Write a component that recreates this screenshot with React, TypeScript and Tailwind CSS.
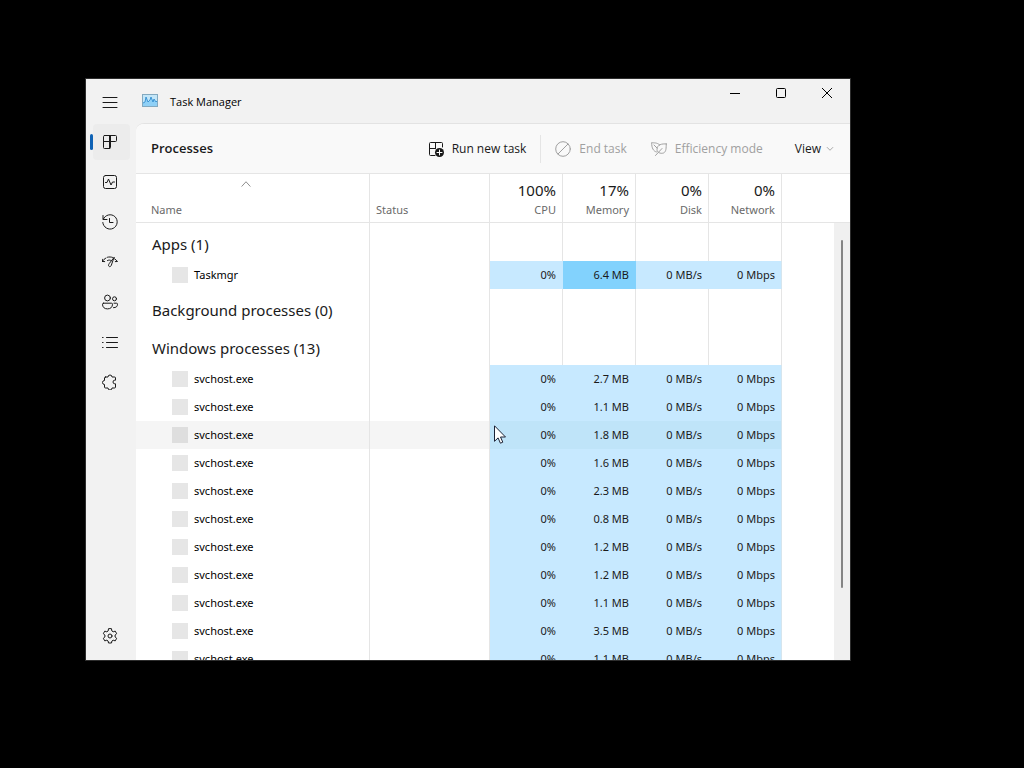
import type { ReactNode } from "react";

type Process = { name: string; memory: string; hot?: boolean; hovered?: boolean };
type Group = { title: string; rows: Process[] };

const groups: Group[] = [
  { title: "Apps (1)", rows: [{ name: "Taskmgr", memory: "6.4 MB", hot: true }] },
  { title: "Background processes (0)", rows: [] },
  {
    title: "Windows processes (13)",
    rows: [
      { name: "svchost.exe", memory: "2.7 MB" },
      { name: "svchost.exe", memory: "1.1 MB" },
      { name: "svchost.exe", memory: "1.8 MB", hovered: true },
      { name: "svchost.exe", memory: "1.6 MB" },
      { name: "svchost.exe", memory: "2.3 MB" },
      { name: "svchost.exe", memory: "0.8 MB" },
      { name: "svchost.exe", memory: "1.2 MB" },
      { name: "svchost.exe", memory: "1.2 MB" },
      { name: "svchost.exe", memory: "1.1 MB" },
      { name: "svchost.exe", memory: "3.5 MB" },
      { name: "svchost.exe", memory: "1.1 MB" },
    ],
  },
];

const metrics = [
  { value: "100%", label: "CPU" },
  { value: "17%", label: "Memory" },
  { value: "0%", label: "Disk" },
  { value: "0%", label: "Network" },
];

function Icon({ children, className = "size-4" }: { children: ReactNode; className?: string }) {
  return (
    <svg
      viewBox="0 0 16 16"
      fill="none"
      stroke="currentColor"
      strokeWidth="1"
      strokeLinecap="round"
      strokeLinejoin="round"
      className={`${className} shrink-0`}
      aria-hidden="true"
    >
      {children}
    </svg>
  );
}

const navItems: { label: string; icon: ReactNode }[] = [
  {
    label: "Processes",
    icon: <path d="M2.500 1.500h11a1 1 0 0 1 1 1v4a1 1 0 0 1-1 1h-12v-5a1 1 0 0 1 1-1ZM7.500 1.500v13M1.500 7.500v6a1 1 0 0 0 1 1h5a1 1 0 0 0 1-1V1.500" />,
  },
  {
    label: "Performance",
    icon: (
      <>
        <rect x="1.5" y="1.5" width="13" height="13" rx="2" />
        <path d="M3.500 8.500H5l1.500-3.500 2.500 6 1.500-3h2" />
      </>
    ),
  },
  {
    label: "App history",
    icon: <path d="M1 1.500v4h4M1.300 5.200A7.200 7.200 0 1 1 .8 8.500M7.500 4.500v4H11" />,
  },
  {
    label: "Startup apps",
    icon: <path d="M.500 7.500C1.300 6 2.500 4.800 4 4M.500 7.500l.2-2.200M.500 7.500l2.200.1M5.500 3.200c1.800-.4 3.500-.3 5 .2M12.500 4.800c1.200.7 2.200 1.600 3 2.700l-2.200.1M12 3.500 7.200 9.600c-.9 1.200-.9 2.500 0 2.900.9.400 1.700-.1 2.100-1.200L12 3.500ZM5.500 6.500c1.200-.6 2.500-.6 3.500 0" />,
  },
  {
    label: "Users",
    icon: (
      <>
        <circle cx="5.500" cy="4" r="2.900" />
        <circle cx="12.500" cy="4.800" r="2" />
        <path d="M1.500 9.200h8a1 1 0 0 1 1 1c0 2.900-1.800 4.700-5 4.700S.5 13.100.5 10.200a1 1 0 0 1 1-1ZM12 9.200h2.500a1 1 0 0 1 1 1c0 2.300-1.300 3.500-4 3.500" />
      </>
    ),
  },
  {
    label: "Details",
    icon: <path d="M.5 3.500h.6M.5 8.500h.6M.5 13.500h.6M4.500 3.500h11M4.500 8.500h11M4.500 13.500h11" />,
  },
  {
    label: "Services",
    icon: (
      <path d="M3.500 3H6a2 2 0 0 1 4 0h2.500a1 1 0 0 1 1 1v2.200h-.7a1.800 1.800 0 0 0 0 3.600h.7V13a1 1 0 0 1-1 1H10a2 2 0 0 1-4 0H3.500a1 1 0 0 1-1-1v-2.500a2 2 0 0 1 0-4V4a1 1 0 0 1 1-1Z" />
    ),
  },
];

function Toolbar() {
  return (
    <header className="flex h-[50px] shrink-0 items-center border-b border-[#e5e5e5] bg-[#f9f9f9] px-[15px] font-['Open_Sans','Noto_Sans',sans-serif] text-[12px]">
      <h1 className="grow text-[13px] font-semibold">Processes</h1>
      <button className="flex items-center gap-2 pr-3.5">
        <Icon>
          <path d="M7 14.500H2.500a1 1 0 0 1-1-1v-11a1 1 0 0 1 1-1h11a1 1 0 0 1 1 1V6M1.500 7.500h6M7.500 1.500v6" />
          <circle cx="11.500" cy="11.500" r="4.500" fill="currentColor" stroke="none" />
          <path d="M11.500 9v5M9 11.500h5" stroke="#fff" />
        </Icon>
        Run new task
      </button>
      <span className="h-7 border-l border-[#e5e5e5]" />
      <button disabled className="flex items-center gap-2 px-3.5 text-[#a0a0a0]">
        <Icon>
          <circle cx="8" cy="8" r="7.300" />
          <path d="m3 13 10-10" />
        </Icon>
        End task
      </button>
      <button disabled className="flex items-center gap-2 pl-2.5 pr-8 text-[#a0a0a0]">
        <Icon>
          <path d="M5.500 11C2.500 10.500.500 7 .7 1.500c2 .8 5-.5 8 2.500M15.300 3c-4.300-.5-9.300.5-9.300 5.500 0 3 3.500 4.500 6.500 3.500 3-1.500 2.500-5 2.800-9ZM4.500 14.500 11 7.500M3 4l3 3" />
        </Icon>
        Efficiency mode
      </button>
      <button className="flex items-center gap-1">
        View
        <Icon className="size-2.5 text-[#777]">
          <path d="m3.500 5.500 4.500 4.500 4.500-4.500" />
        </Icon>
      </button>
    </header>
  );
}

function ProcessRow({ row }: { row: Process }) {
  const cell = row.hovered ? "bg-[#bfe4f9]" : "bg-[#c7e9ff]";
  return (
    <tr className={`h-7 ${row.hovered ? "bg-[#f5f5f5]" : ""}`}>
      <td className="border-r border-[#e5e5e5] py-0 pl-9">
        <div className="flex items-center gap-1.5 text-black">
          <span className={`size-4 ${row.hovered ? "bg-[#dedede]" : "bg-[#e6e6e6]"}`} />
          {row.name}
        </div>
      </td>
      <td className="border-r border-[#e5e5e5]" />
      <td className={`pr-[7px] text-right ${cell}`}>0%</td>
      <td className={`pr-[7px] text-right ${row.hot ? "bg-[#82d2fd]" : cell}`}>{row.memory}</td>
      <td className={`pr-[7px] text-right ${cell}`}>0 MB/s</td>
      <td className={`border-r border-[#d5e5ee] pr-1.5 text-right ${cell}`}>0 Mbps</td>
      <td className="bg-white" />
    </tr>
  );
}

function ProcessTable() {
  return (
    <table className="w-full table-fixed border-separate border-spacing-0 text-[11px] leading-4">
      <colgroup>
        <col />
        <col className="w-[120px]" />
        <col className="w-[73px]" />
        <col className="w-[73px]" />
        <col className="w-[73px]" />
        <col className="w-[73px]" />
        <col className="w-[68px]" />
      </colgroup>
      <thead className="text-[#6a6a6a]">
        <tr className="h-[49px]">
          <th className="border-b border-r border-[#e5e5e5] p-0 pb-1 pl-[15px] text-left align-bottom font-normal">
            <div className="flex justify-center pb-3 pr-7">
              <Icon className="size-3">
                <path d="m2.500 11 5.500-6 5.500 6" />
              </Icon>
            </div>
            Name
          </th>
          <th className="border-b border-r border-[#e5e5e5] p-0 pb-1 pl-1.5 text-left align-bottom font-normal">Status</th>
          {metrics.map((m) => (
            <th key={m.label} className="border-b border-r border-[#e5e5e5] p-0 pb-1 pr-1.5 text-right align-bottom font-normal">
              <div className="pb-0.5 text-[15px] leading-5 text-[#1a1a1a]">{m.value}</div>
              {m.label}
            </th>
          ))}
          <td className="border-b border-[#e5e5e5]" />
        </tr>
      </thead>
      {groups.map((g) => (
        <tbody key={g.title}>
          <tr className="h-[38px] text-[#1a1a1a]">
            <th className="border-r border-[#e5e5e5] p-0 pl-4 pt-1 text-left text-[15px] font-normal whitespace-nowrap">{g.title}</th>
            <td className="border-r border-[#e5e5e5]" />
            {metrics.map((m) => (
              <td key={m.label} className="border-r border-[#e5e5e5]" />
            ))}
            <td />
          </tr>
          {g.rows.map((row, i) => (
            <ProcessRow key={i} row={row} />
          ))}
        </tbody>
      ))}
    </table>
  );
}

export default function App() {
  return (
    <div className="relative h-screen bg-black pt-[79px] pr-[174px] pb-[108px] pl-[86px] font-['Noto_Sans','Open_Sans',sans-serif] text-[#1a1a1a]">
      <main className="flex h-full flex-col overflow-hidden bg-[#f2f2f2] outline outline-[#2d2d2d]">
        <div className="flex h-11 shrink-0 items-start">
          <button aria-label="Open navigation" className="ml-4 mt-[15px]">
            <Icon>
              <path d="M1 3.500h14M1 8.500h14M1 13.500h14" />
            </Icon>
          </button>
          <svg viewBox="0 0 16 14" className="mt-[15px] ml-6 h-3.5 w-4" aria-hidden="true">
            <rect x=".5" y=".5" width="15" height="12" fill="#c3e6f8" stroke="#83a9c0" />
            <path d="M1 12V9l2-1 1-5 2 5 2-2 1-3 2 5 1-3 2 3 1-1v5Z" fill="#8fd0f6" />
            <path d="m1 9 2-1 1-5 2 5 2-2 1-3 2 5 1-3 2 3 1-1" fill="none" stroke="#2584cb" strokeWidth=".8" />
          </svg>
          <span className="ml-3 grow pt-[13px] font-['Open_Sans','Noto_Sans',sans-serif] text-[11px] leading-5 text-black">Task Manager</span>
          <div className="flex text-black">
            <button aria-label="Minimize" className="flex h-7 w-[46px] items-center justify-center">
              <svg viewBox="0 0 10 10" className="size-2.5" stroke="currentColor" aria-hidden="true"><path d="M0 5.500h10" /></svg>
            </button>
            <button aria-label="Maximize" className="flex h-7 w-[46px] items-center justify-center">
              <svg viewBox="0 0 10 10" className="size-2.5" fill="none" stroke="currentColor" aria-hidden="true"><rect x=".5" y=".5" width="9" height="9" rx="1" /></svg>
            </button>
            <button aria-label="Close" className="flex h-7 w-[46px] items-center justify-center">
              <svg viewBox="0 0 10 10" className="size-2.5" stroke="currentColor" aria-hidden="true"><path d="m0 0 10 10M10 0 0 10" /></svg>
            </button>
          </div>
        </div>
        <div className="flex min-h-0 grow">
          <nav className="flex w-[50px] shrink-0 flex-col pb-1.5">
            {navItems.map((item, i) => (
              <button key={item.label} aria-label={item.label} className="flex h-10 items-center pb-0.5 pl-1">
                <span className={`h-4 w-[3px] rounded-full ${i === 0 ? "bg-[#0f62b5]" : ""}`} />
                <span className={`flex h-9 w-[37px] items-center justify-center rounded pr-1 ${i === 0 ? "bg-[#ececec]" : ""}`}>
                  <Icon>{item.icon}</Icon>
                </span>
              </button>
            ))}
            <button aria-label="Settings" className="mt-auto flex h-9 items-center justify-center pr-0.5">
              <Icon>
                <path d="m6.500 1-.4 2-1.300.8-2-.7-1.500 2.600L2.900 7v2l-1.600 1.300 1.500 2.600 2-.7 1.300.8.4 2h3l.4-2 1.300-.8 2 .7 1.500-2.600L13.100 9V7l1.600-1.300-1.500-2.600-2 .7L9.900 3l-.4-2Z" />
                <circle cx="8" cy="8" r="2" />
              </Icon>
            </button>
          </nav>
          <section className="flex min-w-0 grow flex-col overflow-hidden rounded-tl-lg border-t border-[#e3e3e3] bg-white">
            <Toolbar />
            <div className="relative min-h-0 grow overflow-hidden">
              <ProcessTable />
              <div className="absolute top-[49px] right-0 bottom-0 flex w-4 justify-center bg-[#f0f0f0] pt-[17px] pb-[72px]">
                <div className="w-0.5 rounded-full bg-[#858585]" />
              </div>
            </div>
          </section>
        </div>
      </main>
      <svg viewBox="0 0 12 19" className="absolute top-[425px] left-[494px] h-[19px] w-3" aria-hidden="true">
        <path d="M.5.800v15.500l3.600-3.400 2.300 5.300 2.400-1-2.300-5.200h5Z" fill="#fff" stroke="#1c2336" strokeWidth="1" />
      </svg>
    </div>
  );
}
